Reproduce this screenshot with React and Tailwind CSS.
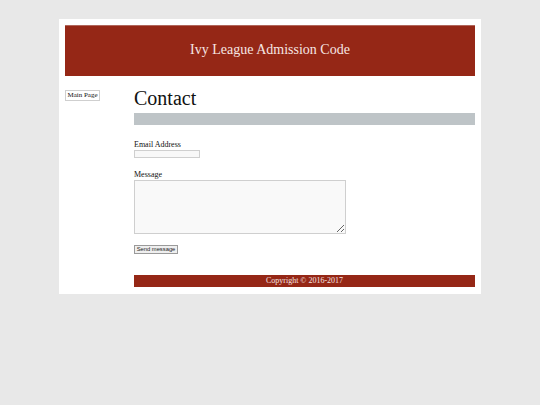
export default function App() {
  return (
    <div className="min-h-[405px] bg-[#e8e8e8] pt-[19px] font-['Liberation_Serif',serif]">
      <div className="mx-auto w-[422px] bg-white px-[6px] pt-[6px] pb-[7px]">
        <div className="h-[51px] border-t border-[#b0665b] bg-[#952716] pt-[13px] text-center text-[14px] text-[#f5e6e3]">
          Ivy League Admission Code
        </div>
        <div className="mt-[12px] flex">
          <div className="w-[69px] shrink-0">
            <button className="mt-[2px] flex h-[11px] w-[35px] items-center justify-center border border-[#cfcfcf] bg-white text-[7px] leading-none text-[#111]">
              Main Page
            </button>
          </div>
          <div className="flex-1">
            <h1 className="text-[20px] leading-[20px] text-[#111]">Contact</h1>
            <div className="mt-[5px] h-[12px] bg-[#bec4c7]" />
            <div className="mt-[15px] text-[8px] leading-[9px] text-[#111]">Email Address</div>
            <div className="mt-[1px] h-[8px] w-[66px] border border-[#cfcfcf] bg-[#f8f8f8]" />
            <div className="mt-[12px] text-[8px] leading-[9px] text-[#111]">Message</div>
            <textarea
              className="mt-[1px] block h-[54px] w-[212px] resize border border-[#cfcfcf] bg-[#f9f9f9] outline-none"
              defaultValue=""
            />
            <button className="mt-[11px] flex h-[9px] w-[44px] items-center justify-center border border-[#9a9a9a] bg-[#efefef] font-['Liberation_Sans',sans-serif] text-[5.8px] leading-none text-[#222]">
              Send message
            </button>
            <div className="mt-[21px] flex h-[12px] items-center justify-center bg-[#952716] text-[8px] leading-none text-[#f5e6e3]">
              Copyright © 2016-2017
            </div>
          </div>
        </div>
      </div>
    </div>
  );
}
